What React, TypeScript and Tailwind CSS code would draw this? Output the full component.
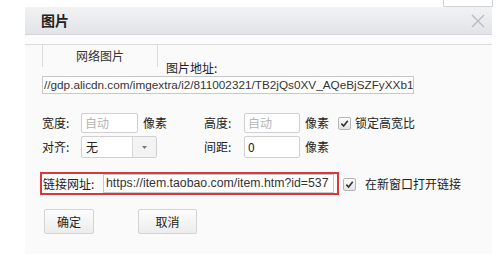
import React from "react";

const F = { fontFamily: '"Noto Sans CJK SC", "Noto Sans", sans-serif' };
const U = { fontFamily: '"Liberation Sans", Arial, sans-serif', fontSize: 12.3 };
const U2 = { fontFamily: '"Liberation Sans", Arial, sans-serif', fontSize: 11.75 };

function Check() {
  return (
    <span className="inline-flex w-[13px] h-[13px] items-center justify-center border border-[#b5b5b5] rounded-[2px] bg-gradient-to-b from-[#fdfdfd] to-[#e4e4e4]">
      <svg width="9" height="9" viewBox="0 0 10 10">
        <path d="M1.5 5.2 L4 7.8 L8.6 2" fill="none" stroke="#333" strokeWidth="1.8" />
      </svg>
    </span>
  );
}

export default function App() {
  return (
    <div className="relative w-[504px] h-[260px] bg-white overflow-hidden text-[12px] text-[#333]" style={F}>
      <div className="absolute left-[443px] top-[-2px] w-[50px] h-[9px] border border-[#d4d4d4] bg-white" />
      <div className="absolute left-[25px] top-[7px] w-[467px] h-[247px] bg-[#fafafa] flex flex-col">
        <div className="h-[28px] flex items-center justify-between bg-gradient-to-b from-[#f1f2f4] to-[#e2e4e7] border-b border-[#d4d6d9] pl-[16px] pr-[7px]">
          <span className="text-[14px] font-bold text-[#222]">图片</span>
          <svg width="14" height="14" viewBox="0 0 14 14">
            <path d="M1 1 L13 13 M13 1 L1 13" stroke="#b9bcc0" strokeWidth="1.4" />
          </svg>
        </div>
        <div className="h-[9px] bg-[#fcfcfc]" />
        <div className="border-t border-[#dcdcdc] flex pl-[17px] h-[27px]">
          <div className="w-[116px] h-[22px] border-x border-[#dcdcdc] flex items-center justify-center text-[12px] text-[#333]">网络图片</div>
          <div className="pl-[8px] pt-[16px] text-[12px] leading-[14px] text-[#222]">图片地址:</div>
        </div>
        <div className="pl-[17px] mt-[5px]">
          <div className="w-[372px] h-[18px] border border-[#c8c8c8] bg-white flex items-center pl-[1px] overflow-hidden whitespace-nowrap text-[#333]" style={U2}>
            //gdp.alicdn.com/imgextra/i2/811002321/TB2jQs0XV_AQeBjSZFyXXb1k
          </div>
        </div>
        <div className="pl-[17px] mt-[19px] flex items-center h-[20px]">
          <span className="w-[39px] text-[#222]">宽度:</span>
          <div className="w-[57px] h-[20px] border border-[#d0d0d0] rounded-[2px] bg-white flex items-center pl-[3px] text-[#b5b5b5]">自动</div>
          <span className="ml-[5px] w-[61px] text-[#222]">像素</span>
          <span className="w-[40px] text-[#222]">高度:</span>
          <div className="w-[56px] h-[20px] border border-[#d0d0d0] rounded-[2px] bg-white flex items-center pl-[3px] text-[#b5b5b5]">自动</div>
          <span className="ml-[5px] w-[33px] text-[#222]">像素</span>
          <Check />
          <span className="ml-[4px] text-[#222]">锁定高宽比</span>
        </div>
        <div className="pl-[17px] mt-[3px] flex items-center h-[22px]">
          <span className="w-[39px] text-[#222]">对齐:</span>
          <div className="w-[76px] h-[22px] border border-[#d0d0d0] rounded-[2px] bg-white flex">
            <span className="flex-1 flex items-center pl-[4px] text-[#222]">无</span>
            <span className="w-[24px] border-l border-[#d8d8d8] bg-[#f3f3f3] flex items-center justify-center">
              <svg width="5" height="3" viewBox="0 0 5 3"><path d="M0 0 H5 L2.5 3 Z" fill="#777" /></svg>
            </span>
          </div>
          <span className="ml-[47px] w-[40px] text-[#222]">间距:</span>
          <div className="w-[56px] h-[22px] border border-[#d0d0d0] rounded-[2px] bg-white flex items-center pl-[3px] text-[#222]">0</div>
          <span className="ml-[5px] text-[#222]">像素</span>
        </div>
        <div className="pl-[15px] mt-[14px] flex items-center">
          <div className="w-[299px] h-[23px] border-[2px] border-[#d8373c] flex items-center">
            <span className="w-[61px] pl-[1px] text-[#222]">链接网址:</span>
            <div className="w-[231px] h-[19px] border border-[#c8c8c8] bg-white flex items-center pl-[2px] overflow-hidden whitespace-nowrap text-[#333]" style={U}>
              https://item.taobao.com/item.htm?id=537
            </div>
          </div>
          <span className="ml-[4px]"><Check /></span>
          <span className="ml-[9px] text-[#222]">在新窗口打开链接</span>
        </div>
        <div className="pl-[19px] mt-[14px] flex gap-[44px]">
          <div className="w-[50px] h-[25px] border border-[#d4d4d4] rounded-[2px] bg-gradient-to-b from-[#fdfdfd] to-[#ececec] flex items-center justify-center text-[#222]">确定</div>
          <div className="w-[59px] h-[25px] border border-[#d4d4d4] rounded-[2px] bg-gradient-to-b from-[#fdfdfd] to-[#ececec] flex items-center justify-center text-[#222]">取消</div>
        </div>
      </div>
    </div>
  );
}
